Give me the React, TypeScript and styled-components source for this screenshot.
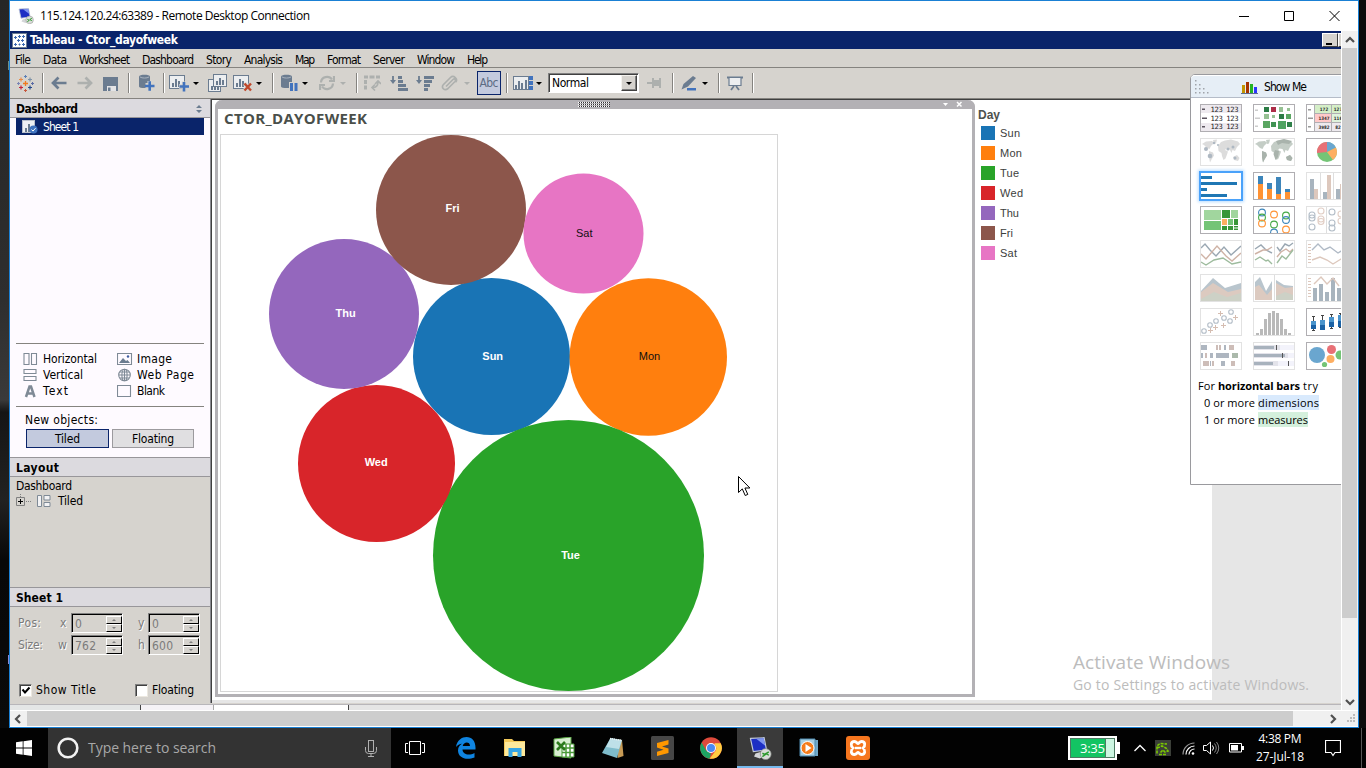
import React, { useLayoutEffect, useRef } from "react";
import styled, { createGlobalStyle, css } from "styled-components";

const tahoma = `"DejaVu Sans Condensed", "DejaVu Sans", sans-serif`;
const segoe = `"Open Sans", "Noto Sans", sans-serif`;
const arial = `"Liberation Sans", Arial, sans-serif`;

const c = {
  face: "#d6d3ce",
  head: "#dcdadf",
  line: "#8a8a90",
  navy: "#0a246a",
  blue: "#1a80d4",
  steel: "#6b7c90",
  accent: "#4273bd",
  faded: "#adb0ae",
};

const Global = createGlobalStyle`
  *, *::before, *::after { box-sizing: border-box; }
  body { margin: 0; background: #050505; overflow: hidden; }
  svg { display: block; flex: none; }
`;

/* ---------- text ---------- */

type LabelLook = {
  $w?: number; $size?: number; $bold?: boolean; $color?: string; $font?: string; $ml?: number; $shadow?: boolean;
};
const LabelBox = styled.span<LabelLook>`
  flex: none;
  display: inline-block;
  white-space: pre;
  width: ${p => (p.$w ? `${p.$w}px` : "auto")};
  margin-left: ${p => p.$ml ?? 0}px;
  font-family: ${p => p.$font ?? tahoma};
  font-stretch: ${p => (p.$font ? "normal" : "condensed")};
  font-size: ${p => p.$size ?? (p.$font ? 11 : 12)}px;
  font-weight: ${p => (p.$bold ? 700 : 400)};
  line-height: 16px;
  color: ${p => p.$color ?? "#000"};
  ${p => p.$shadow && css`text-shadow: 1px 1px 0 #fff;`}
`;

/* A label whose tracking is adjusted so its text fills the width it is given. */
function Label({ children, ...look }: LabelLook & { children: string }) {
  const ref = useRef<HTMLSpanElement>(null);
  const width = look.$w;
  useLayoutEffect(() => {
    const el = ref.current;
    if (!el || !width) return;
    el.style.letterSpacing = "0px";
    const range = document.createRange();
    range.selectNodeContents(el);
    const natural = range.getBoundingClientRect().width;
    el.style.letterSpacing = `${(width - natural) / Math.max(1, children.length - 1)}px`;
  }, [width, children]);
  return <LabelBox ref={ref} {...look}>{children}</LabelBox>;
}

/* ---------- window shell ---------- */

const Desktop = styled.div`
  width: 1366px;
  height: 768px;
  overflow: hidden;
  background: #050505;
`;
const Stage = styled.div`
  position: relative;
  display: flex;
  height: 728px;
  background: linear-gradient(#262626 0, #2e2e2e 300px, #3a3a3a 400px, #151515 412px, #222 500px, #080808 560px, #0a0a0a 100%);
`;
const Wallpaper = styled.div`
  width: 9px;
  display: flex;
  flex-direction: column;
  align-items: flex-end;
  padding-top: 61px;
  gap: 585px;
`;
const Speck = styled.i<{ $c: string }>`
  width: 1px;
  height: 9px;
  background: ${p => p.$c};
`;
const RightEdge = styled.div`
  width: 7px;
  background: #0c0c0c;
`;
const Window = styled.div`
  width: 1350px;
  border: 1px solid ${c.blue};
  background: #fff;
  display: flex;
  flex-direction: column;
`;
const WinTitle = styled.header`
  height: 30px;
  display: flex;
  align-items: center;
  padding-left: 8px;
`;
const WinButtons = styled.div`
  margin-left: auto;
  display: flex;
  gap: 35px;
  padding-right: 18px;
`;
const WinBody = styled.div`
  height: 679px;
  display: flex;
`;
const VScroll = styled.div`
  width: 17px;
  background: #f0f0f0;
  border-left: 1px solid #fff;
  border-right: 1px solid #f4f4f4;
  display: flex;
  flex-direction: column;
  align-items: center;
`;
const VThumb = styled.div`
  width: 100%;
  height: 570px;
  margin-top: 4px;
  margin-bottom: 79px;
  background: #cdcdcd;
`;
const HScroll = styled.div`
  height: 17px;
  border-top: 1px solid #fff;
  border-bottom: 1px solid #fff;
  background: #f0f0f0;
  display: flex;
  align-items: center;
`;
const HThumb = styled.div`
  width: 1266px;
  height: 15px;
  margin: 0 35px 0 4px;
  background: #cdcdcd;
`;

/* ---------- remote application ---------- */

const Remote = styled.div`
  position: relative;
  width: 1331px;
  overflow: hidden;
  background: ${c.face};
  display: flex;
  flex-direction: column;
`;
const AppTitle = styled.div`
  height: 18px;
  flex: none;
  background: ${c.navy};
  display: flex;
  align-items: center;
  padding-left: 2px;
`;
const CaptionButton = styled.div`
  width: 16px;
  height: 14px;
  background: ${c.face};
  border: 1px solid;
  border-color: #fff #404040 #404040 #fff;
  display: flex;
  align-items: flex-end;
  padding: 0 0 1px 3px;
`;
const CaptionGroup = styled.div`
  margin-left: auto;
  margin-right: -13px;
  display: flex;
`;
const Dash = styled.i`
  width: 6px;
  height: 2px;
  background: #000;
`;
const MenuBar = styled.nav`
  height: 19px;
  flex: none;
  border-bottom: 1px solid #85837f;
  display: flex;
  align-items: center;
  gap: 12px;
  padding: 3px 0 0 5px;
`;
const Toolbar = styled.div`
  height: 31px;
  flex: none;
  border-bottom: 1px solid #85837f;
  display: flex;
  align-items: center;
`;
const Tool = styled.span<{ $ml: number }>`
  flex: none;
  margin-left: ${p => p.$ml}px;
`;
const Sep = styled.i<{ $ml: number }>`
  flex: none;
  width: 2px;
  height: 20px;
  margin-left: ${p => p.$ml}px;
  background: #85837f;
  border-right: 1px solid #fff;
`;
const Caret = styled.i<{ $ml: number; $dim?: boolean }>`
  flex: none;
  margin-left: ${p => p.$ml}px;
  width: 6px;
  border: 3px solid transparent;
  border-bottom: 0;
  border-top-color: ${p => (p.$dim ? c.faded : "#000")};
`;
const Toggle = styled.div`
  width: 24px;
  height: 24px;
  margin-left: 7px;
  background: #c3cade;
  border: 1px solid ${c.navy};
  display: flex;
  align-items: center;
  justify-content: center;
`;
const Select = styled.div`
  width: 91px;
  height: 20px;
  margin-left: 6px;
  border: 1px solid;
  border-color: #808080 #fff #fff #808080;
  box-shadow: inset 1px 1px 0 #404040;
  background: #fff;
  display: flex;
  align-items: center;
  justify-content: space-between;
  padding: 1px 1px 1px 3px;
`;
const DropButton = styled.div`
  width: 16px;
  height: 16px;
  background: ${c.face};
  border: 1px solid;
  border-color: #f4f2ee #404040 #404040 #f4f2ee;
  box-shadow: inset -1px -1px 0 #808080;
  display: flex;
  align-items: center;
  justify-content: center;
`;
const Main = styled.div`
  height: 604px;
  flex: none;
  display: flex;
`;
const StatusStrip = styled.div`
  flex: none;
  height: 7px;
  margin-top: 1px;
  border-top: 1px solid #b8b6ba;
  border-bottom: 1px solid #fff;
  background: #e5e5e5;
  display: flex;
`;
const StripCell = styled.i<{ $w: number; $bg: string; $edge: string }>`
  width: ${p => p.$w}px;
  background: ${p => p.$bg};
  border-right: 1px solid ${p => p.$edge};
`;

/* ---------- left panel ---------- */

const Side = styled.aside`
  width: 201px;
  border-right: 1px solid ${c.line};
  display: flex;
  flex-direction: column;
`;
const Section = styled.div<{ $top?: boolean }>`
  flex: none;
  height: ${p => (p.$top ? 20 : 19)}px;
  background: ${c.head};
  border-bottom: 1px solid #98969a;
  border-top: ${p => (p.$top ? "1px solid #98969a" : 0)};
  display: flex;
  align-items: center;
  justify-content: space-between;
  padding: 1px 8px 0 6px;
`;
const White = styled.div`
  height: 339px;
  flex: none;
  background: #fefaff;
  padding: 0 6px;
`;
const SheetRow = styled.div`
  height: 17px;
  background: ${c.navy};
  display: flex;
  align-items: center;
  padding: 1px 0 0 6px;
`;
const ListSpace = styled.div`
  height: 225px;
`;
const Objects = styled.div`
  height: 64px;
  border-top: 1px solid #85837f;
  border-bottom: 1px solid #85837f;
  padding: 7px 0 0 7px;
  display: grid;
  grid-template-columns: 94px 80px;
  grid-auto-rows: 16px;
`;
const ObjectItem = styled.div`
  display: flex;
  align-items: center;
  gap: 4px;
`;
const NewObjects = styled.div`
  padding: 5px 0 0 9px;
  display: flex;
  flex-direction: column;
  gap: 1px;
`;
const ButtonRow = styled.div`
  display: flex;
  gap: 3px;
  padding-left: 1px;
`;
const ModeButton = styled.div<{ $on?: boolean }>`
  width: ${p => (p.$on ? 83 : 82)}px;
  height: 19px;
  border: 1px solid ${p => (p.$on ? c.navy : "#9c9a9e")};
  background: ${p => (p.$on ? "#c3cade" : "#e0dfe1")};
  display: flex;
  align-items: center;
  justify-content: center;
`;
const Tree = styled.div`
  height: 110px;
  flex: none;
  padding: 1px 0 0 6px;
`;
const TreeRow = styled.div`
  height: 15px;
  display: flex;
  align-items: center;
`;
const Props = styled.div`
  flex: 1;
  padding: 5px 0 0 8px;
`;
const PropRow = styled.div`
  height: 22px;
  display: flex;
  align-items: center;
`;
const Spin = styled.div<{ $ml: number }>`
  width: 52px;
  height: 20px;
  margin-left: ${p => p.$ml}px;
  border: 1px solid;
  border-color: #808080 #fff #fff #808080;
  box-shadow: inset 1px 1px 0 #000;
  display: flex;
  align-items: center;
  justify-content: space-between;
  padding: 1px 0 0 3px;
`;
const SpinButtons = styled.div`
  display: flex;
  flex-direction: column;
`;
const SpinButton = styled.div<{ $down?: boolean }>`
  width: 16px;
  height: 8px;
  border-top: 1px solid #fff;
  border-left: 1px solid #fff;
  border-bottom: 1px solid #000;
  border-right: 1px solid #000;
  display: flex;
  align-items: center;
  justify-content: center;
  &::after {
    content: "";
    border: 2px solid transparent;
    border-${p => (p.$down ? "bottom" : "top")}: 0;
    border-${p => (p.$down ? "top" : "bottom")}-color: #808080;
  }
`;
const CheckRow = styled.div`
  display: flex;
  align-items: center;
  margin-top: 26px;
  padding-left: 1px;
`;
const Check = styled.div`
  width: 13px;
  height: 13px;
  background: #fff;
  border: 1px solid;
  border-color: #808080 #ece8e0 #ece8e0 #808080;
  box-shadow: inset 1px 1px 0 #404040;
`;

/* ---------- dashboard canvas ---------- */

const Area = styled.section`
  flex: 1;
  border-left: 1px solid #404040;
  border-top: 1px solid #404040;
  background: #e6e6e6;
`;
const Canvas = styled.div`
  width: 1000px;
  height: 600px;
  background: #fff;
  display: flex;
  padding-left: 3px;
`;
const Frame = styled.div`
  width: 760px;
  height: 597px;
  border: 3px solid #b3b1b5;
  border-top: 0;
  border-radius: 7px 7px 0 0;
  padding-left: 2px;
`;
const FrameBar = styled.div`
  height: 9px;
  margin: 0 -3px 0 -5px;
  border-radius: 7px 7px 0 0;
  background: #b3b1b5;
  display: flex;
  align-items: center;
  padding-left: 363px;
`;
const ViewTitle = styled.h1`
  margin: 0;
  height: 25px;
  font-weight: 400;
  display: flex;
  padding: 1px 0 0 4px;
`;
const View = styled.div`
  width: 558px;
  height: 558px;
  border: 1px solid #d6d6d6;
`;
const Legend = styled.div`
  padding: 5px 0 0 3px;
`;
const LegendRow = styled.div`
  height: 20px;
  display: flex;
  align-items: center;
  padding-left: 3px;
  gap: 5px;
`;
const Swatch = styled.i<{ $c: string }>`
  width: 14px;
  height: 14px;
  background: ${p => p.$c};
`;

/* ---------- show me ---------- */

const ShowMe = styled.div`
  position: absolute;
  left: 1180px;
  top: 43px;
  width: 162px;
  height: 411px;
  background: #fff;
  border: 1px solid #9a9a9e;
  border-radius: 5px 0 0 0;
`;
const ShowHead = styled.div`
  height: 23px;
  background: #e6eef6;
  border: 1px solid #b5bcc8;
  border-width: 0 0 1px;
  border-top: 1px solid #fff;
  border-radius: 4px 0 0 0;
  display: flex;
  align-items: center;
  padding: 1px 0 0 4px;
`;
const Gallery = styled.div`
  display: grid;
  grid-template-columns: repeat(3, 42px);
  grid-auto-rows: 28px;
  gap: 6px 11px;
  padding: 6px 0 0 9px;
`;
const Thumb = styled.div<{ $state?: string }>`
  border: 1px solid ${p => (p.$state === "off" ? "#e2e2e2" : "#b0aeb2")};
  ${p => p.$state === "on" && css`border-color: #4aa2fa; box-shadow: 0 0 0 1px #4aa2fa, 0 0 3px 2px #b8dcff;`}
`;
const Hint = styled.div`
  padding: 7px 0 0 7px;
  display: flex;
  flex-direction: column;
`;
const HintRow = styled.div<{ $in?: boolean }>`
  height: 17px;
  display: flex;
  align-items: center;
  padding-left: ${p => (p.$in ? 6 : 0)}px;
`;
const Mark = styled.span<{ $c: string }>`
  height: 15px;
  margin-left: 3px;
  background: ${p => p.$c};
  display: flex;
  align-items: center;
`;

/* ---------- overlays ---------- */

const Pointer = styled.div`
  position: absolute;
  left: 738px;
  top: 476px;
`;
const Watermark = styled.div`
  position: absolute;
  left: 1073px;
  top: 650px;
  display: flex;
  flex-direction: column;
  & > span { line-height: 24px; }
  & > span:last-child { line-height: 22px; }
`;

/* ---------- taskbar ---------- */

const Taskbar = styled.footer`
  height: 40px;
  background: #020202;
  display: flex;
  align-items: center;
`;
const Start = styled.div`
  width: 48px;
  padding-left: 16px;
`;
const Search = styled.div`
  width: 343px;
  height: 40px;
  background: #333;
  display: flex;
  align-items: center;
  padding-left: 9px;
`;
const TaskButton = styled.div<{ $on?: boolean }>`
  width: 46px;
  height: 40px;
  margin-right: 3px;
  display: flex;
  align-items: center;
  justify-content: center;
  padding-top: 2px;
  background: ${p => (p.$on ? "#3a3a3a" : "transparent")};
  border-bottom: 2px solid ${p => (p.$on ? "#76b9ed" : "transparent")};
`;
const Apps = styled.div`
  display: flex;
  margin-left: 1px;
  & > :first-child { margin-right: 5px; }
`;
const Tray = styled.div`
  margin-left: auto;
  height: 40px;
  display: flex;
  align-items: center;
`;
const Meter = styled.div`
  width: 49px;
  height: 24px;
  border: 2px solid #fff;
  background: linear-gradient(90deg, #13c463 35px, #4c7a62 35px, #4c7a62 36px, #cdf6e2 36px);
  box-shadow: inset 0 0 0 1px #4c7a62;
  display: flex;
  align-items: center;
  padding-left: 10px;
`;
const MeterTip = styled.i`
  width: 3px;
  height: 12px;
  background: #fff;
`;
const Clock = styled.div`
  width: 60px;
  margin-left: 6px;
  display: flex;
  flex-direction: column;
  align-items: center;
  gap: 2px;
`;
const DesktopEdge = styled.i`
  width: 1px;
  height: 40px;
  margin: 0 4px 0 20px;
  background: #555;
`;

/* ---------- small drawings ---------- */

const RdpIcon = ({ s = 16 }: { s?: number }) => (
  <svg width={s} height={s} viewBox="0 0 16 16">
    <path d="M1 1 10.500 .5 12.200 9 3 10.200Z" fill="#1d2fc4" stroke="#c3cbd8" strokeWidth=".8" />
    <path d="M5 1.200 10.300.9 11.300 6Z" fill="#7f96f0" />
    <path d="M4.500 11.500 8 10.500v2l1.500 1.200-2 1.300-4-1.400Z" fill="#d4d6d8" />
    <circle cx="11.600" cy="11.900" r="3.800" fill="#d9dcd9" stroke="#8c908c" strokeWidth=".5" />
    <path d="m9.300 11.300 2 1-2 1.400M13.800 10.300l-2 1.200 2 1.200" stroke="#2e9a2e" fill="none" strokeWidth="1" />
  </svg>
);

const plus = (x: number, y: number, r: number, col: string, w = 1) => (
  <path key={`${x}-${y}`} d={`M${x - r} ${y}h${2 * r}M${x} ${y - r}v${2 * r}`} stroke={col} strokeWidth={w} fill="none" />
);

const AppIcon = () => (
  <svg width="15" height="15" viewBox="0 0 15 15">
    <rect x=".5" y=".5" width="14" height="14" fill="#fff" stroke="#6b7c90" />
    {plus(3.5, 4.5, 1.5, "#3d6ab0")}{plus(7.5, 3.5, 1.5, "#3d6ab0")}{plus(11.5, 3.5, 1.5, "#3d6ab0")}
    {plus(10.5, 7.5, 1.5, "#3d6ab0")}{plus(6.5, 7.5, 1.5, "#3d6ab0")}
    {plus(3.5, 11.5, 1.5, "#3d6ab0")}{plus(11.5, 11.5, 1.5, "#3d6ab0")}{plus(7.5, 11.5, 1, "#3d6ab0")}
  </svg>
);

const LogoIcon = () => (
  <svg width="17" height="17" viewBox="0 0 17 17">
    {plus(8.5, 8.5, 2.5, "#f07a1f", 1.300)}
    {plus(4, 4.500, 2, "#eb8a45", 1.200)}{plus(13, 4.500, 2, "#7d93a8", 1.200)}
    {plus(4, 12.500, 2, "#c72037", 1.200)}{plus(13, 12.500, 2, "#23488c", 1.200)}
    {plus(8.5, 1.500, 1.500, "#5b7fb5")}{plus(8.5, 15.500, 1.500, "#c7583f")}
    {plus(1.500, 8.5, 1.500, "#7b85b5")}{plus(15.500, 8.5, 1.500, "#5b6ba5")}
  </svg>
);

const Arrow = ({ flip, col }: { flip?: boolean; col: string }) => (
  <svg width="16" height="14" viewBox="0 0 16 14">
    <path d="M7.500 1.500 2 7l5.500 5.500M2 7h13.500" transform={flip ? "matrix(-1 0 0 1 16 0)" : undefined} stroke={col} strokeWidth="2.700" fill="none" />
  </svg>
);
const Save = () => (
  <svg width="15" height="15" viewBox="0 0 15 15">
    <path d="M0 1h15v14H0z" fill={c.steel} />
    <path d="M4 10h9v5H4z" fill="#e4e4e6" /><path d="M5 11.5h2.5V15H5z" fill={c.steel} />
  </svg>
);
const Db = () => (
  <>
    <path d="M0 2.5C0 .2 11 .2 11 2.5v10c0 2-11 2-11 0Z" fill={c.steel} />
    <path d="M1 3c2 1.4 7 1.4 9 0" stroke="#a8b2be" fill="none" />
  </>
);
const DbPlus = () => (
  <svg width="16" height="18" viewBox="0 0 16 18"><Db />
    <path d="M6.500 11.500h9M11 7v9.500" stroke={c.face} strokeWidth="5" />
    <path d="M6 12h9.500M10.700 7.200v9.600" stroke={c.accent} strokeWidth="2.600" />
  </svg>
);
const DbPause = () => (
  <svg width="17" height="18" viewBox="0 0 17 18"><Db />
    <path d="M8 8h9v10H8z" fill={c.face} /><path d="M9 9h3v8H9zM13.500 9h3v8h-3z" fill={c.accent} />
  </svg>
);
const ChartBox = ({ x = 0, y = 0, w = 15, h = 13 }) => (
  <g transform={`translate(${x} ${y})`}>
    <rect x=".5" y=".5" width={w} height={h} fill="#eceef0" stroke={c.steel} />
    <path d={`M3 ${h - 1}v-4h2v4M6 ${h - 1}V4h2v${h - 5}M9 ${h - 1}V6h2v${h - 7}`} fill={c.steel} />
  </g>
);
const ChartPlus = () => (
  <svg width="20" height="17" viewBox="0 0 20 17"><ChartBox />
    <path d="M10 11.500h10M15 6.500v10" stroke={c.face} strokeWidth="4.400" />
    <path d="M10.500 11.500H20M15 7v9.500" stroke={c.accent} strokeWidth="2.600" />
  </svg>
);
const ChartDup = () => (
  <svg width="19" height="18" viewBox="0 0 19 18"><ChartBox y={5} w={12} h={12} /><ChartBox x={5} w={13} h={12} /></svg>
);
const ChartX = () => (
  <svg width="19" height="18" viewBox="0 0 19 18"><ChartBox y={1} />
    <path d="m11.500 9.500 7 7M18.500 9.500l-7 7" stroke={c.face} strokeWidth="4" />
    <path d="m11.500 9.500 6.500 7M18 9.500l-6.500 7" stroke="#c0492c" strokeWidth="2.400" />
  </svg>
);
const Refresh = () => (
  <svg width="16" height="16" viewBox="0 0 16 16" fill="none" stroke={c.faded} strokeWidth="2.200">
    <path d="M2 7.500C2.300 1.500 10 0 13 4.500M14 8.500c-.4 6-8 7.400-11 3" /><path d="M15 1v5h-5M1 15v-5h5" />
  </svg>
);
const Swap = () => (
  <svg width="17" height="16" viewBox="0 0 17 16" stroke={c.faded} fill="none" strokeWidth="3">
    <path d="M0 2h4M5.500 2h5M12 2h4M1.500 5v4M1.500 10.500v4" /><path d="M8.500 12.500c4 0 5.500-1.500 5.500-5.500M11 9l3-3 3 3M11 9.500l-3 3 3 3" strokeWidth="1.600" />
  </svg>
);
const Sort = ({ desc }: { desc?: boolean }) => (
  <svg width="18" height="15" viewBox="0 0 18 15">
    <path d="M3 0v6" stroke={c.steel} strokeWidth="1.800" /><path d="M0 4h6L3 8Z" fill={c.steel} />
    <path d={desc ? "M8 0h10v3H8zM8 4h8v3H8zM8 8h6v3H8zM8 12h4v3H8z" : "M8 0h4v3H8zM8 4h5v3H8zM8 8h8v3H8zM8 12h10v3H8z"} fill={c.steel} />
  </svg>
);
const Clip = () => (
  <svg width="17" height="16" viewBox="0 0 17 16">
    <path d="M5 11.500 12 4.500c1.500-1.500 3.500.3 2 2L7 13.500C3.500 16.500-.5 12.500 2.500 9.500L9.500 2.500c3-3 8 1.500 5 4.800" stroke={c.faded} strokeWidth="1.700" fill="none" />
  </svg>
);
const ShowCards = () => (
  <svg width="21" height="14" viewBox="0 0 21 14">
    <rect x=".5" y=".5" width="15" height="13" fill="#eceef0" stroke={c.steel} />
    <path d="M2 13V9h2v4M5 13V5h2v8M8 13V7h2v6M12 13V4h2v9" fill={c.steel} />
    <path d="M16 0h4v4h-4zM16 5h4v4h-4zM16 10h4v4h-4z" fill={c.accent} />
  </svg>
);
const Pin = () => (
  <svg width="16" height="12" viewBox="0 0 16 12"><path d="M0 5h5V1h2v2h5V1h2v10h-2V9H7v2H5V7H0Z" fill={c.faded} /></svg>
);
const Pencil = () => (
  <svg width="16" height="15" viewBox="0 0 16 15">
    <path d="m.5 13.500 2-5.500L12 0l3 2L7 10.500Z" fill={c.steel} /><path d="M6 12h9v2.500H6z" fill={c.accent} />
  </svg>
);
const Present = () => (
  <svg width="16" height="15" viewBox="0 0 16 15" fill="none" stroke={c.steel}>
    <path d="M0 1.500h16" strokeWidth="2" /><path d="M2 2v7.500h12V2" fill="#eceef0" strokeWidth="1.200" /><path d="m7 10-3 4M9 10l3 4" strokeWidth="1.800" />
  </svg>
);

const objIcons: Record<string, React.ReactNode> = {
  Horizontal: <path d="M1 1.500h5v11H1zM8.500 1.500h5v11h-5z" />,
  Vertical: <path d="M1 1.500h12v4H1zM1 8.500h12v4H1z" />,
  Text: <path d="M3 13 6.500 2.500h1.500L11.500 13M4.500 9.500h5.500" strokeWidth="2.500" />,
  Image: <><path d="M.5 1.500h14v11H.5z" /><path d="m2 11 4-5 3 3 1.500-1 2.500 3Z" fill="#6b7c90" stroke="none" /><circle cx="11" cy="4.500" r="1.200" fill="#3d5aa0" stroke="none" /></>,
  "Web Page": <><circle cx="7.500" cy="7" r="5.800" /><ellipse cx="7.500" cy="7" rx="2.600" ry="5.800" /><path d="M2 7h11M2.800 4h9.400M2.800 10h9.400M7.500 1v12" /></>,
  Blank: <path d="M.5 1.500h13v11H.5z" />,
};
const ObjIcon = ({ name }: { name: string }) => (
  <svg width="16" height="14" viewBox="0 0 16 14" fill="none" stroke="#7f8a96" strokeWidth="1.100">{objIcons[name]}</svg>
);

/* ---------- show-me thumbnails, 42 × 28 each ---------- */

const R = (x: number, y: number, w: number, h: number, fill: string) => (
  <rect key={`${x},${y},${w}`} x={x} y={y} width={w} height={h} fill={fill} />
);
const line = (d: string, stroke: string, w = 1) => <path key={d} d={d} stroke={stroke} strokeWidth={w} fill="none" />;
const trend = (d: string, stroke: string) => line(d, stroke, 1.400);
const ring = (x: number, y: number, col: string, r = 3.400) => (
  <circle key={`${x}/${y}`} cx={x} cy={y} r={r} stroke={col} strokeWidth="1.100" fill="none" />
);
const land = "M2 6 6 3.500 12 3 14 5 11 8 9.500 11 7 10 4 7ZM9 13l4 1.500 1 3-2.500 4-1.500 3-1-5ZM13 2l4-.5-1 4-2 .5ZM18 8l3-4 4-1.500 6-1 7 2 2 2.500-3 3-2 4-2.500-1-1 3-2-4-3-.5-1.500 1.500 3 1.500-1 3-1.500 4-2 1.500-1.500-4-.5-3-3-2ZM33 19l4-2 2.500 3-1.500 3-4-1Z";
const g = ["#2c7c45", "#96c193", "#5aa662"];

const thumbs: { state?: string; art: React.ReactNode }[] = [
  { art: <>{R(1, 1, 40, 8, "#eeeaef")}{R(1, 19, 40, 8, "#eeeaef")}
    {[5, 14, 22.500].map((y, i) => <React.Fragment key={y}>{R(2, y - 0.5, i === 1 ? 5 : 3, 1.500, "#5c5560")}
      <text x="10.500" y={y + 2.800} fontSize="7.200" textLength="28" fontFamily="DejaVu Sans Mono, monospace" fill="#222">123 123</text></React.Fragment>)}</> },
  { art: <>{R(2, 5.500, 3, 1.500, "#ccc")}{R(2, 13.500, 5, 1.500, "#ccc")}{R(2, 21.500, 3, 1.500, "#ccc")}
    {R(11, 3, 5, 5, g[0])}{R(18, 3, 5, 5, "#ad2d48")}{R(26, 3, 4, 5, g[1])}{R(34, 4, 3, 3, g[1])}
    {R(11, 10, 5, 5, g[1])}{R(19, 11, 3, 3, g[1])}{R(26, 10, 5, 5, g[0])}{R(33, 10, 5, 5, g[2])}
    {R(10, 17, 7, 7, g[2])}{R(18, 18, 5, 5, "#3f9353")}{R(25, 17, 8, 8, "#4fa361")}{R(34, 18, 5, 5, "#2f8049")}</> },
  { art: <>{R(9, 1, 32, 8, "#d5efc8")}{R(9, 10, 16, 8, "#ffc9c9")}{R(25, 10, 16, 8, "#dff3dc")}{R(9, 19, 32, 8, "#eeeaef")}
    {line("M8.500 1v26M25.500 1v26M8.500 9.500h33M8.500 18.500h33", "#b0aeb2")}
    {R(2, 5, 3, 1.500, "#999")}{R(2, 13.500, 5, 1.500, "#999")}{R(2, 22, 3, 1.500, "#999")}
    {[["172", "127"], ["1347", "116"], ["3982", "82"]].map((r, i) => <g key={i} fontFamily="DejaVu Sans Mono, monospace" fontSize="4.600" fontWeight="700" fill="#222" textAnchor="middle">
      <text x="18" y={7 + i * 9}>{r[0]}</text><text x="32" y={7 + i * 9}>{r[1]}</text></g>)}</> },
  { state: "off", art: <><path d={land} fill="#dcdcdc" />{[[6, 11, 2], [10, 18, 2.300], [14, 5, 1.200], [28, 11, 1.600], [33, 9, 1.500], [35, 20, 1.500], [18, 7, 1]].map(([x, y, r]) =>
    <circle key={x} cx={x} cy={y} r={r} fill="#aeb8c2" />)}</> },
  { state: "off", art: <><path d={land} fill="#c4cdc6" /><path d="M23 3 31 1l8 2-3 3-7-1-4 2ZM9 13l4 1.500 1 3-2.500 4-1.500 3-1-5ZM22 12l4 1-1 6-2.500 3-2-6ZM33 19l4-2 2.500 3-1.500 3-4-1Z" fill="#a9b3ac" /></> },
  { art: <><circle cx="21" cy="14" r="10" fill="#74c476" /><path d="M21 14V4A10 10 0 0 1 29.900 9.500Z" fill="#6aa6cf" />
    <path d="M21 14 29.900 9.500A10 10 0 0 1 27 22Z" fill="#fdae61" /><path d="M21 14 11 15A10 10 0 0 1 21 4Z" fill="#e87076" /></> },
  { state: "on", art: <>{R(1, 4, 11, 3, "#1f77b4")}{R(1, 10, 36, 3, "#1f77b4")}{R(1, 16, 6, 3, "#1f77b4")}{R(1, 22, 26, 3, "#1f77b4")}</> },
  { art: <>{R(5, 4, 5, 8, "#3d85ba")}{R(5, 12, 5, 15, "#ff9233")}{R(14, 11, 5, 6, "#3d85ba")}{R(14, 17, 5, 10, "#ff9233")}
    {R(23, 5, 5, 17, "#3d85ba")}{R(23, 22, 5, 5, "#ff9233")}{R(32, 17, 5, 3, "#3d85ba")}{R(32, 20, 5, 7, "#ff9233")}</> },
  { state: "off", art: <>{line("M14.500 1v26M27.500 1v26", "#dedede")}{R(4, 7, 4, 20, "#a8b4be")}{R(8, 17, 4, 10, "#ddc8bd")}
    {R(17, 20, 4, 7, "#a8b4be")}{R(21, 3, 4, 24, "#ddc8bd")}{R(30, 17, 4, 10, "#a8b4be")}{R(34, 12, 4, 15, "#ddc8bd")}</> },
  { art: <>{R(4, 4, 17, 10, "#a1d69e")}{R(4, 15, 17, 9, "#74c476")}{R(22, 4, 8, 8, "#389638")}{R(31, 4, 7, 8, "#a1d69e")}
    {R(22, 13, 5, 6, "#fdae61")}{R(28, 13, 5, 6, "#74c476")}{R(34, 13, 4, 6, "#389638")}{R(22, 20, 5, 4, "#389638")}{R(28, 20, 5, 4, "#389638")}{R(34, 20, 4, 1.500, "#389638")}{R(34, 22.500, 4, 1.500, "#389638")}</> },
  { art: <>{ring(9, 6.500, "#3d85ba")}{ring(9, 11.500, "#45a845")}{ring(9, 17.500, "#ff9233")}{ring(21, 8.500, "#ff9233")}{ring(21, 18.500, "#45a845")}
    {ring(21, 26.500, "#3d85ba")}{ring(33, 9.500, "#45a845")}{ring(33, 14, "#3d85ba")}{ring(33, 23.500, "#ff9233")}</> },
  { state: "off", art: <>{line("M20.500 1v26", "#dedede")}{ring(6, 9, "#b4bec8", 3)}{ring(6, 12, "#b4bec8", 3)}{ring(6, 21, "#b4bec8", 3)}
    {ring(15, 5, "#e2cfc6", 3)}{ring(15, 13, "#e2cfc6", 3)}{ring(15, 15.500, "#e2cfc6", 3)}{ring(26, 6, "#b4bec8", 3)}{ring(26, 17, "#b4bec8", 3)}{ring(26, 22, "#b4bec8", 3)}{ring(35, 8, "#e2cfc6", 3)}{ring(35, 15, "#e2cfc6", 3)}</> },
  { state: "off", art: <>{trend("M1 8 5 4l5 6 6 6 8-9 7 8L41 6", "#9aa7b2")}{trend("M1 14l5 5L17 6l9 10 6 5 9-8", "#cfb3a6")}{trend("M1 22l5 3 8-5 9-2 9 6 9-2", "#9dbb9d")}</> },
  { state: "off", art: <>{line("M21.500 1v26", "#dedede")}{trend("M2 9l6-4 5 5 6 3", "#9aa7b2")}{trend("M2 14 10 10h4l5-3", "#cfb3a6")}{trend("M2 20l5-3 6 4 2-1 4 4", "#9dbb9d")}
    {trend("M24 7l3 4 5-7 4 2 4-3", "#9aa7b2")}{trend("M24 17l4-5 5-3 4 3 3-3", "#cfb3a6")}{trend("M24 23l5-7 4 3 7-9", "#9dbb9d")}</> },
  { state: "off", art: <>{[4, 7, 10, 13, 16, 19, 22].map(y => R(2, y, 3, 1, "#ddc8bd"))}{trend("M6 10l6-6 6 6 6-3 8 6 8-5", "#b0bac6")}{trend("M6 20l8-3 7 3 6 4 8-5 6-3", "#ddc8bd")}</> },
  { state: "off", art: <><path d="M1 17 13 4l12 10 16-5v18H1Z" fill="#b9c5cd" /><path d="M1 18 13 9l15 9 13-3v12H1Z" fill="#dccac0" /><path d="M1 25 14 18l13 5 14-4v8H1Z" fill="#cdd1c6" /></> },
  { state: "off", art: <><path d="M2 26V8l5-5 6 14 6-10v19Z" fill="#b9c5cd" /><path d="M2 26V13l4-2 8 10 5-6v11Z" fill="#dccac0" /><path d="M23 26V6l8 5 9 1v14Z" fill="#b9c5cd" /><path d="M23 26V9l9 5 8-1v13Z" fill="#dccac0" /><path d="M23 26v-4l9-4 8 3v5Z" fill="#cdd1c6" />{line("M21.500 1v26", "#dedede")}</> },
  { state: "off", art: <>{[4, 7, 10, 13, 16, 19, 22].map(y => R(2, y, 3, 1, "#ddc8bd"))}{R(7, 14, 4, 13, "#a8b4be")}{R(13, 10, 4, 17, "#a8b4be")}{R(19, 18, 4, 9, "#a8b4be")}{R(25, 4, 4, 23, "#a8b4be")}{R(31, 14, 4, 13, "#a8b4be")}
    {trend("M8 10l7-7 6 7 6-6 6 8", "#ddc8bd")}</> },
  { state: "off", art: <>{[[4, 23], [10, 17], [16, 13], [24, 10], [30, 13], [31, 4]].map(([x, y]) => ring(x, y, "#b4bec8", 2.300))}
    {[[10, 22], [15, 19], [23, 17], [20, 5], [35, 9]].map(([x, y]) => plus(x + 0.5, y + 0.5, 2.500, "#d5bdb1"))}</> },
  { state: "off", art: <>{[2, 6, 16, 22, 24, 22, 16, 6, 2].map((h, i) => R(3 + i * 4, 27 - h, 3, h, "#b9b9b9"))}</> },
  { art: <>{[[5, 13, 8, 9], [14, 12, 7, 10], [23, 9, 6, 11], [32, 7, 5, 12]].map(([x, y, t, h], i) => <g key={i}>{line(`M${x + 2.500} ${t}v15`, "#444")}{line(`M${x + 1} ${t + 0.5}h3M${x + 1} ${t + 14.500}h3`, "#444")}{R(x, y, 5, Math.floor(h / 2), "#4a94cc")}{R(x, y + Math.floor(h / 2), 5, Math.floor(h / 2), "#1b62a5")}</g>)}</> },
  { state: "off", art: <>{[[1, 3, 6, "b"], [16, 3, 2, "p"], [19, 3, 2, "p"], [24, 3, 2, "b"], [29, 3, 5, "p"], [1, 11, 2, "b"], [5, 11, 2, "p"], [10, 11, 3, "b"], [16, 11, 13, "b"], [32, 11, 6, "g"], [3, 19, 6, "p"], [10, 19, 1, "b"], [12, 19, 2, "p"], [21, 19, 4, "b"], [31, 19, 4, "p"]].map(([x, y, w, k]) =>
    R(x as number, y as number, w as number, 5, k === "b" ? "#aeb6c0" : k === "p" ? "#cdbdb8" : "#abb9ab"))}</> },
  { state: "off", art: <>{[3, 11, 19].map((y, i) => <g key={y}>{R(1, y, 40, 5, "#f3f3fb")}{R(1, y, [26, 34, 24][i], 5, "#e3e3ea")}{R(1, y + 1, [20, 31, 19][i], 3, "#a8b2bd")}{R([23, 29, 35][i], y, 1, 5, "#555")}</g>)}</> },
  { art: <><circle cx="11" cy="13" r="8" fill="#6aa6cf" /><circle cx="25.500" cy="7.500" r="4.500" fill="#e87076" /><circle cx="24.500" cy="17" r="4" fill="#fdae61" /><circle cx="18.500" cy="22.500" r="2.600" fill="#74c476" /><circle cx="34" cy="13" r="4.500" fill="#74c476" /></> },
];

/* ---------- data ---------- */

const menus: [string, number][] = [["File", 16], ["Data", 24], ["Worksheet", 51], ["Dashboard", 52], ["Story", 26], ["Analysis", 39], ["Map", 20], ["Format", 34], ["Server", 32], ["Window", 38], ["Help", 21]];
const objects: [string, number][] = [["Horizontal", 54], ["Image", 35], ["Vertical", 40], ["Web Page", 57], ["Text", 25], ["Blank", 28]];
const days: { name: string; w: number; color: string; cx: number; cy: number; r: number; lx: number; ly: number; dark?: boolean }[] = [
  { name: "Sun", w: 20, color: "#1974b5", cx: 491.500, cy: 356.500, r: 78.500, lx: 492.700, ly: 360 },
  { name: "Mon", w: 22, color: "#ff7f0e", cx: 648.300, cy: 357, r: 78.700, lx: 649.500, ly: 360, dark: true },
  { name: "Tue", w: 19, color: "#29a329", cx: 568.500, cy: 555.500, r: 135.500, lx: 570.500, ly: 559 },
  { name: "Wed", w: 23, color: "#d8252a", cx: 376.500, cy: 463.500, r: 78.500, lx: 376.200, ly: 466 },
  { name: "Thu", w: 19, color: "#9467bd", cx: 344, cy: 314, r: 75, lx: 345.700, ly: 317 },
  { name: "Fri", w: 13, color: "#8c564b", cx: 451, cy: 210, r: 75, lx: 452.500, ly: 212 },
  { name: "Sat", w: 17, color: "#e775c4", cx: 583.500, cy: 233.500, r: 60, lx: 584.300, ly: 237, dark: true },
];

const chev = (d: string) => <svg width="10" height="10" viewBox="0 0 10 10"><path d={d} stroke="#505050" strokeWidth="2.200" fill="none" /></svg>;

const taskIcons: React.ReactNode[] = [
  <svg width="22" height="22" viewBox="0 0 22 22"><path d="M1 10C2 3 7 0 11.500 0 17 0 21 4 20.500 12.500H7.500c.3 5.500 7 6.200 12 3.500v4.500C11 24 3 20.500 3 13.500 3 10 5 8 7 6.800 4.500 7 2.500 8 1 10Zm6.700-1H15c0-5-6.500-4.500-7.300 0Z" fill="#0f84e0" /></svg>,
  <svg width="22" height="20" viewBox="0 0 22 20"><path d="M0 1h8l2 2h11v15H0z" fill="#f3c95a" /><path d="M1 4h20v14H1z" fill="#fde99c" /><path d="M4.500 19v-9h13v9h-4v-5h-5v5z" fill="#35a5e5" /></svg>,
  <svg width="22" height="22" viewBox="0 0 22 22"><path d="M1 2 18 0v21L1 19Z" fill="#d9efd2" stroke="#5aa544" /><path d="M9 7h12v13H9z" fill="#fff" stroke="#4a9a38" /><path d="M9 11h12M9 15.500h12M13 7v13M17 7v13" stroke="#4a9a38" strokeWidth="1.500" /><path d="M4 5l8 8M12 5l-8 8" stroke="#2b7a1c" strokeWidth="2.600" /></svg>,
  <svg width="22" height="22" viewBox="0 0 22 22"><path d="M17 2.500 20 3l1.500 16-6 2Z" fill="#c79a55" /><path d="M8.500 1 20 3 15 21 0 16Z" fill="#7fbccb" /><path d="M8.500 1 20 3l-3 9L4 10Z" fill="#d8eff4" opacity=".7" /><path d="M8 1.500 20 3.500" stroke="#eee" strokeWidth="1.500" strokeDasharray="1 1" /></svg>,
  <svg width="23" height="24" viewBox="0 0 23 24"><rect width="23" height="24" rx="1.500" fill="#474747" /><path d="M17.500 4v4.500L11 10.500l6.500 2V17L6 20v-4.300l6.500-2L6 11.500V7Z" fill="#ff9800" /></svg>,
  <svg width="22" height="22" viewBox="0 0 22 22"><circle cx="11" cy="11" r="10.800" fill="#de4a3c" /><path d="M1.600 5.600 6.300 13.700l4.700 2.700L9.500 21.700A10.800 10.800 0 0 1 1.600 5.600Z" fill="#1da462" /><path d="M20.700 6.200A10.800 10.800 0 0 1 9.500 21.700L15.700 13.700 16.400 11l-2-4.800Z" fill="#ffcd41" /><circle cx="11" cy="11" r="5" fill="#fff" /><circle cx="11" cy="11" r="4" fill="#4a8af4" /></svg>,
  <RdpIcon s={23} />,
  <svg width="20" height="20" viewBox="0 0 20 20"><path d="M5 2h14v16H5z" fill="#6fa8c8" /><path d="M1 1h15v17H1z" fill="#a6cfe3" stroke="#4f8bb0" /><circle cx="8.500" cy="10" r="6.500" fill="#f57c1b" stroke="#fff" /><path d="m6.500 6 6 4-6 4Z" fill="#fff" /></svg>,
  <svg width="24" height="24" viewBox="0 0 24 24"><rect width="24" height="24" rx="3" fill="#f6761e" /><path d="M8.500 5.500c-4 0-4 4.500-1.500 6.500-2.500 2-2.500 6.500 1.500 6.500 2 0 2.500-2 3.500-2s1.500 2 3.500 2c4 0 4-4.500 1.500-6.500 2.500-2 2.500-6.500-1.500-6.500-2 0-2.500 2-3.500 2s-1.500-2-3.500-2Z" fill="none" stroke="#fff" strokeWidth="2.800" /><path d="M9 12h6" stroke="#fff" strokeWidth="2.400" /></svg>,
];

function SpinField({ value, w, ml }: { value: string; w: number; ml: number }) {
  return (
    <Spin $ml={ml}>
      <Label $w={w} $color="#7b7b7b">{value}</Label>
      <SpinButtons><SpinButton /><SpinButton $down /></SpinButtons>
    </Spin>
  );
}

function LeftPanel() {
  return (
    <Side>
      <Section>
        <Label $w={62} $bold>Dashboard</Label>
        <svg width="6" height="8" viewBox="0 0 6 8"><path d="M3 0l3 3H0zM3 8l3-3H0z" fill={c.steel} /></svg>
      </Section>
      <White>
        <ListSpace>
          <SheetRow>
            <svg width="16" height="14" viewBox="0 0 16 14">
              <rect x=".5" y=".5" width="12" height="12" fill="#eef0f4" stroke="#b9c0cc" /><path d="M3 12V8h2v4M6 12V4h2v8M9.500 12V6h2v6" fill={c.steel} />
              <circle cx="11.500" cy="9.500" r="4" fill="#3f73c0" /><path d="m9.500 9.500 1.500 1.600 2.600-3" stroke="#fff" fill="none" />
            </svg>
            <Label $w={36} $ml={5} $color="#fff">Sheet 1</Label>
          </SheetRow>
        </ListSpace>
        <Objects>
          {objects.map(([name, w]) => <ObjectItem key={name}><ObjIcon name={name} /><Label $w={w}>{name}</Label></ObjectItem>)}
        </Objects>
        <NewObjects>
          <Label $w={73}>New objects:</Label>
          <ButtonRow>
            <ModeButton $on><Label $w={25}>Tiled</Label></ModeButton>
            <ModeButton><Label $w={42}>Floating</Label></ModeButton>
          </ButtonRow>
        </NewObjects>
      </White>
      <Section $top><Label $w={43} $bold>Layout</Label></Section>
      <Tree>
        <TreeRow><Label $w={56}>Dashboard</Label></TreeRow>
        <TreeRow>
          <svg width="36" height="14" viewBox="0 0 36 14" fill="none">
            <path d="M.5 3.500h8v8h-8z" stroke="#808080" /><path d="M2 7.500h5M4.500 5v5" stroke="#000" /><path d="M10 7.500h5M4.500 0v3" stroke="#808080" strokeDasharray="1 1" />
            <path d="M21.500 1.500h4v11h-4zM28 1.500h6v4.500h-6zM28 8.500h6v4h-6z" stroke="#7f8a96" fill="#f2f2f4" />
          </svg>
          <Label $w={25} $ml={6}>Tiled</Label>
        </TreeRow>
      </Tree>
      <Section $top><Label $w={47} $bold>Sheet 1</Label></Section>
      <Props>
        <PropRow>
          <Label $w={23} $color="#7b7b7b" $shadow>Pos:</Label><Label $w={6} $ml={19} $color="#7b7b7b" $shadow>x</Label><SpinField value="0" w={7} ml={5} />
          <Label $w={6} $ml={15} $color="#7b7b7b" $shadow>y</Label><SpinField value="0" w={7} ml={4} />
        </PropRow>
        <PropRow>
          <Label $w={25} $color="#7b7b7b" $shadow>Size:</Label><Label $w={9} $ml={15} $color="#7b7b7b" $shadow>w</Label><SpinField value="762" w={21} ml={4} />
          <Label $w={7} $ml={15} $color="#7b7b7b" $shadow>h</Label><SpinField value="600" w={21} ml={3} />
        </PropRow>
        <CheckRow>
          <Check><svg width="11" height="11" viewBox="0 0 11 11"><path d="m2.500 4.500 2.500 3 4.500-5" stroke="#000" strokeWidth="2" fill="none" /></svg></Check>
          <Label $w={60} $ml={4}>Show Title</Label>
          <Tool $ml={39}><Check /></Tool>
          <Label $w={42} $ml={4}>Floating</Label>
        </CheckRow>
      </Props>
    </Side>
  );
}

function ToolStrip() {
  return (
    <Toolbar>
      <Tool $ml={7}><LogoIcon /></Tool><Sep $ml={8} />
      <Tool $ml={7}><Arrow col={c.steel} /></Tool><Tool $ml={10}><Arrow flip col={c.faded} /></Tool><Tool $ml={10}><Save /></Tool>
      <Sep $ml={10} /><Tool $ml={9}><DbPlus /></Tool><Sep $ml={8} />
      <Tool $ml={4}><ChartPlus /></Tool><Caret $ml={4} /><Tool $ml={9}><ChartDup /></Tool><Tool $ml={6}><ChartX /></Tool><Caret $ml={4} />
      <Sep $ml={10} /><Tool $ml={7}><DbPause /></Tool><Caret $ml={4} /><Tool $ml={11}><Refresh /></Tool><Caret $ml={5} $dim />
      <Sep $ml={10} /><Tool $ml={6}><Swap /></Tool><Tool $ml={9}><Sort /></Tool><Tool $ml={8}><Sort desc /></Tool>
      <Tool $ml={7}><Clip /></Tool><Caret $ml={6} $dim />
      <Toggle><Label $w={19} $size={12} $color="#5c6c84">Abc</Label></Toggle>
      <Sep $ml={5} /><Tool $ml={5}><ShowCards /></Tool><Caret $ml={2} />
      <Select><Label $w={37}>Normal</Label><DropButton><Caret $ml={0} /></DropButton></Select>
      <Tool $ml={8}><Pin /></Tool><Sep $ml={9} /><Tool $ml={7}><Pencil /></Tool><Caret $ml={5} />
      <Sep $ml={10} /><Tool $ml={7}><Present /></Tool><Sep $ml={9} />
    </Toolbar>
  );
}

function Bubbles() {
  return (
    <svg width="556" height="556" viewBox="221 135 556 556">
      {days.map(d => <circle key={d.name} cx={d.cx} cy={d.cy} r={d.r} fill={d.color} />)}
      {days.map(d => (
        <text key={d.name} x={d.lx} y={d.ly} fontFamily={arial} fontSize="11" textAnchor="middle"
          fontWeight={d.dark ? 400 : 700} fill={d.dark ? "#111" : "#fff"}>{d.name}</text>
      ))}
    </svg>
  );
}

function ShowMePanel() {
  return (
    <ShowMe>
      <ShowHead>
        <svg width="16" height="16" viewBox="0 0 16 16">
          {[[0, 1], [0, 5], [4, 5], [0, 9], [4, 9], [8, 9], [0, 13], [4, 13], [8, 13], [12, 13]].map(([x, y]) => R(x, y, 1.500, 1.500, "#a0a4aa"))}
        </svg>
        <Tool $ml={30}><svg width="17" height="13" viewBox="0 0 17 13">{R(1, 4, 3, 8, "#c29400")}{R(5, 1, 3, 11, "#a63200")}{R(9, 3, 3, 9, "#24b324")}{R(13, 6, 3, 6, "#2a35ff")}{R(0, 12, 17, 1, "#5b6d90")}</svg></Tool>
        <Label $w={43} $ml={6}>Show Me</Label>
      </ShowHead>
      <Gallery>
        {thumbs.map((t, i) => <Thumb key={i} $state={t.state}><svg width="40" height="26" viewBox="1 1 40 26">{t.art}</svg></Thumb>)}
      </Gallery>
      <Hint>
        <HintRow><Label $font={segoe} $w={17}>For</Label><Label $font={segoe} $bold $w={82} $ml={3}>horizontal bars</Label><Label $font={segoe} $w={15} $ml={3}>try</Label></HintRow>
        <HintRow $in><Label $font={segoe} $w={51}>0 or more</Label><Mark $c="#d9eafd"><Label $font={segoe} $w={61}>dimensions</Label></Mark></HintRow>
        <HintRow $in><Label $font={segoe} $w={51}>1 or more</Label><Mark $c="#d4f0dc"><Label $font={segoe} $w={50}>measures</Label></Mark></HintRow>
      </Hint>
    </ShowMe>
  );
}

function RemoteApp() {
  return (
    <Remote>
      <AppTitle>
        <AppIcon /><Label $w={148} $ml={3} $bold $color="#fff">Tableau - Ctor_dayofweek</Label>
        <CaptionGroup><CaptionButton><Dash /></CaptionButton><CaptionButton /></CaptionGroup>
      </AppTitle>
      <MenuBar>{menus.map(([m, w]) => <Label key={m} $w={w}>{m}</Label>)}</MenuBar>
      <ToolStrip />
      <Main>
        <LeftPanel />
        <Area>
          <Canvas>
            <Frame>
              <FrameBar>
                <svg width="396" height="9" viewBox="0 0 396 9">
                  {[2, 4, 6].map(y => <path key={y} d={`M0 ${y + 0.500}h32`} stroke="#fff" strokeDasharray="1 1" />)}
                  {[2, 4, 6].map(y => <path key={`d${y}`} d={`M1 ${y + 0.500}h32`} stroke="#303030" strokeDasharray="1 1" />)}
                  <path d="M365 3h5l-2.500 3Z" fill="#fff" /><path d="m379 2 4.500 4.500M383.500 2 379 6.500" stroke="#fff" strokeWidth="1.500" />
                </svg>
              </FrameBar>
              <ViewTitle><Label $font={segoe} $bold $size={15} $w={143} $color="#4a4f4a">CTOR_DAYOFWEEK</Label></ViewTitle>
              <View><Bubbles /></View>
            </Frame>
            <Legend>
              <Label $font={arial} $bold $size={12} $w={22} $color="#4d514d">Day</Label>
              {days.map(d => <LegendRow key={d.name}><Swatch $c={d.color} /><Label $font={arial} $size={11} $w={d.w} $color="#3c403c">{d.name}</Label></LegendRow>)}
            </Legend>
          </Canvas>
        </Area>
      </Main>
      <StatusStrip><StripCell $w={131} $bg="#e4e6e6" $edge="#444" /><StripCell $w={73} $bg="#f5f2f6" $edge="#aaa" /><StripCell $w={135} $bg="#fff" $edge="#444" /></StatusStrip>
      <ShowMePanel />
    </Remote>
  );
}

export default function App() {
  return (
    <Desktop>
      <Global />
      <Stage>
        <Wallpaper><Speck $c="#6f8f86" /><Speck $c="#8a8ad8" /></Wallpaper>
        <Window>
          <WinTitle>
            <RdpIcon /><Label $font={segoe} $size={12} $w={270} $ml={6}>115.124.120.24:63389 - Remote Desktop Connection</Label>
            <WinButtons>
              <svg width="10" height="10" viewBox="0 0 10 10"><path d="M0 5.500h10" stroke="#000" /></svg>
              <svg width="10" height="10" viewBox="0 0 10 10"><path d="M.5.5h9v9h-9z" stroke="#000" fill="none" /></svg>
              <svg width="11" height="10" viewBox="0 0 11 10"><path d="M.5 0l10 10M10.500 0l-10 10" stroke="#000" fill="none" /></svg>
            </WinButtons>
          </WinTitle>
          <WinBody>
            <RemoteApp />
            <VScroll>
              <svg width="16" height="13" viewBox="0 -4 16 13"><path d="m4 7 4-4 4 4" stroke="#505050" strokeWidth="2.200" fill="none" /></svg>
              <VThumb />
              {chev("M1 3l4 4 4-4")}
            </VScroll>
          </WinBody>
          <HScroll>
            <Tool $ml={3}>{chev("M7 1 3 5l4 4")}</Tool>
            <HThumb />
            {chev("M3 1l4 4-4 4")}
            <Tool $ml={9}><svg width="9" height="9" viewBox="0 0 9 9">{[[6, 0], [3, 3], [6, 3], [0, 6], [3, 6], [6, 6]].map(([x, y]) => R(x, y, 2, 2, "#bbb"))}</svg></Tool>
          </HScroll>
        </Window>
        <RightEdge />
        <Watermark>
          <Label $font={segoe} $size={19} $w={157} $color="#bcbcbc">Activate Windows</Label>
          <Label $font={segoe} $size={14} $w={236} $color="#bcbcbc">Go to Settings to activate Windows.</Label>
        </Watermark>
        <Pointer>
          <svg width="13" height="21" viewBox="0 0 13 21"><path d="M.5.500v16l3.800-3.600 2.900 6.600 2.600-1.100-2.900-6.400h5Z" fill="#fff" stroke="#000" /></svg>
        </Pointer>
      </Stage>
      <Taskbar>
        <Start><svg width="16" height="16" viewBox="0 0 16 16"><path d="M0 2.300 6.700 1.300v6.300H0zM7.500 1.200 16 0v7.600H7.500zM0 8.400h6.700v6.300L0 13.700zM7.500 8.400H16V16l-8.500-1.200z" fill="#fff" /></svg></Start>
        <Search>
          <svg width="22" height="22" viewBox="0 0 22 22"><circle cx="11" cy="11" r="9.300" stroke="#f2f2f2" strokeWidth="2.600" fill="none" /></svg>
          <Label $font={segoe} $size={14} $w={128} $ml={9} $color="#a8a8a8">Type here to search</Label>
          <Tool $ml={149}><svg width="12" height="17" viewBox="0 0 12 17" stroke="#b0b0b0" fill="none"><rect x="3.500" y=".5" width="5" height="11" /><path d="M.5 7v3.500q0 3 3 3h5q3 0 3-3V7M6 13.500v3M3 16.500h6" /></svg></Tool>
        </Search>
        <Apps>
          <TaskButton>
            <svg width="20" height="14" viewBox="0 0 20 14" stroke="#fff" fill="none"><path d="M4.500.5h11v13h-11zM3 2.500H.500v9H3M17 2.500h2.500v9H17" /></svg>
          </TaskButton>
          {taskIcons.map((icon, i) => <TaskButton key={i} $on={i === 6}>{icon}</TaskButton>)}
        </Apps>
        <Tray>
          <Meter><Label $font={segoe} $size={13} $w={25} $color="#fff">3:35</Label></Meter><MeterTip />
          <Tool $ml={14}><svg width="12" height="8" viewBox="0 0 12 8"><path d="m.5 7 5.500-5.500L11.500 7" stroke="#fff" strokeWidth="1.300" fill="none" /></svg></Tool>
          <Tool $ml={9}><svg width="16" height="16" viewBox="0 0 16 16"><path d="M0 0h16v16H0z" fill="#3b3f38" /><path d="M2 13.500V6L5 3.500 12 4M2 8l5-2 4 2 2 3-3 1-2-2-3 3M4 14.500h8" stroke="#7ac800" strokeWidth="1.600" fill="none" strokeDasharray="3 1" /></svg></Tool>
          <Tool $ml={11}><svg width="13" height="13" viewBox="0 0 13 13" fill="none" strokeWidth="1.200"><path d="M1 12.500A11.500 11.500 0 0 1 12.500 1" stroke="#999" /><path d="M4 12.500A8.500 8.500 0 0 1 12.500 4M7 12.500A5.500 5.500 0 0 1 12.500 7" stroke="#fff" /><circle cx="11" cy="11.500" r="1.300" fill="#fff" /></svg></Tool>
          <Tool $ml={8}><svg width="17" height="14" viewBox="0 0 17 14" stroke="#fff" fill="none"><path d="M.5 4.500h3l4-3.500v12l-4-3.500h-3z" /><path d="M9.500 4.500q2 2.500 0 5" /><path d="M11.500 2.500q3.500 4.500 0 9M13.500 1q4.500 6 0 12" stroke="#888" /></svg></Tool>
          <Tool $ml={9}><svg width="15" height="10" viewBox="0 0 15 10"><path d="M.5.500h12v8.500H.500z" stroke="#fff" fill="none" />{R(2, 2, 7, 5.500, "#fff")}{R(13, 3, 2, 4, "#fff")}</svg></Tool>
          <Clock><Label $font={segoe} $size={12} $w={43} $color="#fff">4:38 PM</Label><Label $font={segoe} $size={12} $w={48} $color="#fff">27-Jul-18</Label></Clock>
          <Tool $ml={15}><svg width="16" height="17" viewBox="0 0 16 17"><path d="M.5.500h15v12H10L8 15.500 6 12.500H.500z" stroke="#fff" strokeWidth="1.200" fill="none" /></svg></Tool>
          <DesktopEdge />
        </Tray>
      </Taskbar>
    </Desktop>
  );
}
